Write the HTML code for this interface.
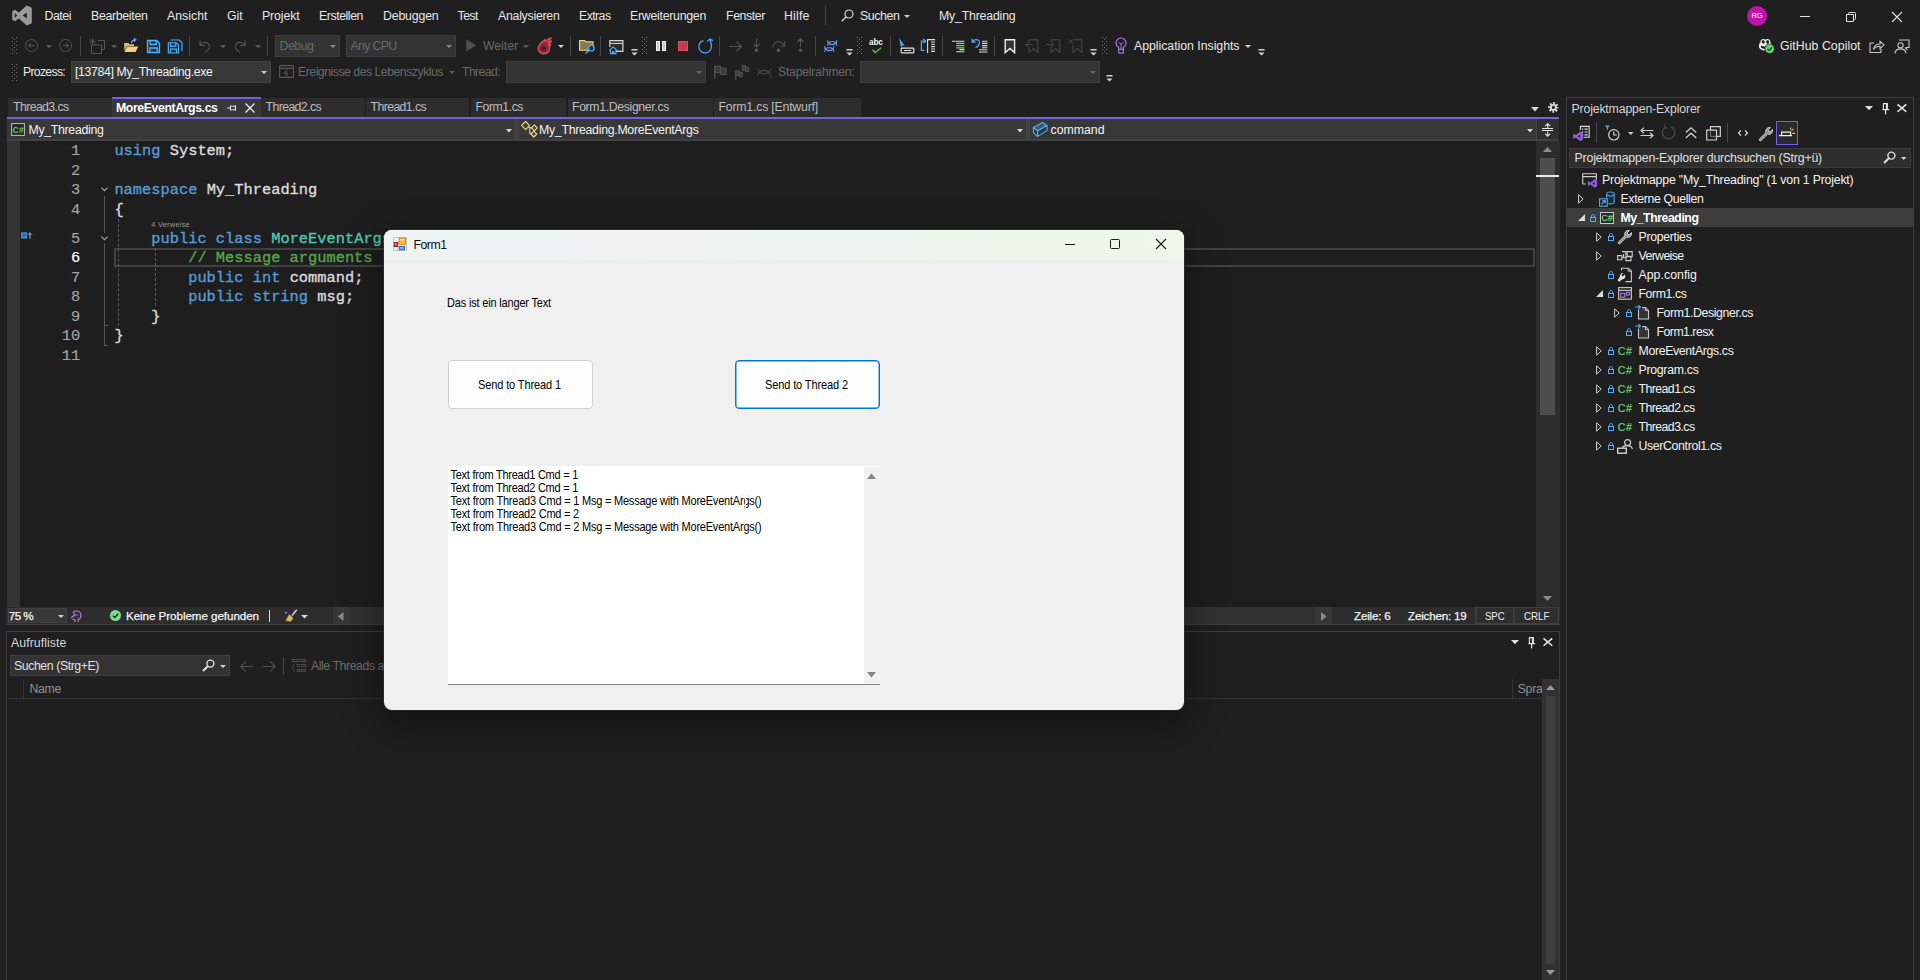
<!DOCTYPE html>
<html lang="de">
<head>
<meta charset="utf-8">
<title>My_Threading - Microsoft Visual Studio</title>
<style>
*{box-sizing:border-box;margin:0;padding:0}
html,body{width:1920px;height:980px;overflow:hidden;background:#1f1f1f}
body{font-family:"Liberation Sans",sans-serif;font-size:12px;color:#e6e6e6;position:relative}
.abs{position:absolute}
.t{position:absolute;white-space:pre}
svg{position:absolute;overflow:visible}

</style>
</head>
<body>

<!-- ===== top ===== -->
<div id="top">
<svg style="left:12px;top:5px;" width="20" height="21" viewBox="0 0 20 21"><path d="M14.8 0.5L19.8 2.8V18.2L14.8 20.5L6.8 13.4L3 16.2L0.2 14.8V6.2L3 4.8L6.8 7.6Z M14.8 7.4L10.8 10.5L14.8 13.6Z M2.8 8.3V12.7L5.3 10.5Z" fill="#9a9a9a" fill-rule="evenodd"/></svg>
<span class="t" style="left:44.5px;top:7.74px;font-size:12.3px;color:#e8e8e8;line-height:16px;height:16px;letter-spacing:-0.444px;">Datei</span>
<span class="t" style="left:91px;top:7.74px;font-size:12.3px;color:#e8e8e8;line-height:16px;height:16px;letter-spacing:-0.298px;">Bearbeiten</span>
<span class="t" style="left:167px;top:7.74px;font-size:12.3px;color:#e8e8e8;line-height:16px;height:16px;letter-spacing:0.025px;">Ansicht</span>
<span class="t" style="left:227px;top:7.74px;font-size:12.3px;color:#e8e8e8;line-height:16px;height:16px;letter-spacing:-0.073px;">Git</span>
<span class="t" style="left:262px;top:7.74px;font-size:12.3px;color:#e8e8e8;line-height:16px;height:16px;letter-spacing:-0.112px;">Projekt</span>
<span class="t" style="left:319px;top:7.74px;font-size:12.3px;color:#e8e8e8;line-height:16px;height:16px;letter-spacing:-0.427px;">Erstellen</span>
<span class="t" style="left:383px;top:7.74px;font-size:12.3px;color:#e8e8e8;line-height:16px;height:16px;letter-spacing:-0.158px;">Debuggen</span>
<span class="t" style="left:457.5px;top:7.74px;font-size:12.3px;color:#e8e8e8;line-height:16px;height:16px;letter-spacing:-0.516px;">Test</span>
<span class="t" style="left:498px;top:7.74px;font-size:12.3px;color:#e8e8e8;line-height:16px;height:16px;letter-spacing:-0.251px;">Analysieren</span>
<span class="t" style="left:579px;top:7.74px;font-size:12.3px;color:#e8e8e8;line-height:16px;height:16px;letter-spacing:-0.560px;">Extras</span>
<span class="t" style="left:630px;top:7.74px;font-size:12.3px;color:#e8e8e8;line-height:16px;height:16px;letter-spacing:-0.254px;">Erweiterungen</span>
<span class="t" style="left:726px;top:7.74px;font-size:12.3px;color:#e8e8e8;line-height:16px;height:16px;letter-spacing:-0.386px;">Fenster</span>
<span class="t" style="left:784px;top:7.74px;font-size:12.3px;color:#e8e8e8;line-height:16px;height:16px;letter-spacing:0.178px;">Hilfe</span>
<div class="abs" style="left:825px;top:5px;width:1px;height:20px;background:#464646;"></div>
<svg style="left:841px;top:9px;" width="13" height="13" viewBox="0 0 13 13"><circle cx="8" cy="5" r="4" fill="none" stroke="#d8d8d8" stroke-width="1.2"/><path d="M5.2 7.8L0.8 12.2" stroke="#d8d8d8" stroke-width="1.4"/></svg>
<span class="t" style="left:860px;top:7.74px;font-size:12.3px;color:#e8e8e8;line-height:16px;height:16px;letter-spacing:-0.370px;">Suchen</span>
<svg style="left:904px;top:15px;" width="6" height="3" viewBox="0 0 6 3"><path d="M0 0h6L3.0 3z" fill="#d0d0d0"/></svg>
<span class="t" style="left:939px;top:7.74px;font-size:12.3px;color:#e8e8e8;line-height:16px;height:16px;letter-spacing:-0.176px;">My_Threading</span>
<div class="abs" style="left:1747px;top:6px;width:20px;height:20px;background:#c212a9;border-radius:10px;"></div>
<span class="t" style="left:1751.5px;top:8.40px;font-size:7.5px;color:#ffffff;line-height:16px;height:16px;letter-spacing:-0.125px;">RG</span>
<div class="abs" style="left:1800px;top:16px;width:10px;height:1px;background:#e0e0e0;"></div>
<svg style="left:1846px;top:12px;" width="10" height="10" viewBox="0 0 10 10"><path d="M0.5 2.5h7v7h-7z M2.5 2.5v-1.2q0-0.8 0.8-0.8h5.4q0.8 0 0.8 0.8v5.4q0 0.8-0.8 0.8h-1.2" fill="none" stroke="#e0e0e0" stroke-width="1"/></svg>
<svg style="left:1892px;top:12px;" width="10" height="10" viewBox="0 0 10 10"><path d="M0 0L10 10M10 0L0 10" stroke="#e0e0e0" stroke-width="1.1"/></svg>
<svg style="left:12px;top:37px;" width="5" height="17" viewBox="0 0 5 17"><g fill="#707070" shape-rendering="crispEdges"><rect x="0" y="0" width="1" height="1"/><rect x="4" y="0" width="1" height="1"/><rect x="2" y="2" width="1" height="1"/><rect x="0" y="4" width="1" height="1"/><rect x="4" y="4" width="1" height="1"/><rect x="2" y="6" width="1" height="1"/><rect x="0" y="8" width="1" height="1"/><rect x="4" y="8" width="1" height="1"/><rect x="2" y="10" width="1" height="1"/><rect x="0" y="12" width="1" height="1"/><rect x="4" y="12" width="1" height="1"/><rect x="2" y="14" width="1" height="1"/><rect x="0" y="16" width="1" height="1"/><rect x="4" y="16" width="1" height="1"/></g></svg>
<svg style="left:25px;top:39px;" width="13" height="13" viewBox="0 0 13 13"><circle cx="6.5" cy="6.5" r="6" fill="none" stroke="#555555"/><path d="M9.5 6.5h-6M6 4L3.5 6.5L6 9" fill="none" stroke="#555555"/></svg>
<svg style="left:46px;top:44.5px;" width="6" height="3" viewBox="0 0 6 3"><path d="M0 0h6L3.0 3z" fill="#5e5e5e"/></svg>
<svg style="left:59px;top:39px;" width="13" height="13" viewBox="0 0 13 13"><circle cx="6.5" cy="6.5" r="6" fill="none" stroke="#555555"/><path d="M3.5 6.5h6M7 4L9.5 6.5L7 9" fill="none" stroke="#555555"/></svg>
<div class="abs" style="left:80px;top:36px;width:1px;height:20px;background:#464646;"></div>
<svg style="left:89px;top:38px;" width="17" height="16" viewBox="0 0 17 16"><g fill="none" stroke="#555555"><path d="M8.5 2.5h7v9h-3"/><path d="M2.5 7h10v8.5h-10z"/><path d="M3.5 0.2v7M0 3.7h7M1 1.2l5 5M6 1.2L1 6.2" stroke-width="0.8"/></g></svg>
<svg style="left:111px;top:44.5px;" width="6" height="3" viewBox="0 0 6 3"><path d="M0 0h6L3.0 3z" fill="#5e5e5e"/></svg>
<svg style="left:123px;top:38px;" width="16" height="15" viewBox="0 0 16 15"><path d="M1 5h4.5l1 1.2H11V8H4L1.5 13.5Z" fill="#d6b56c"/><path d="M4.3 8.6H15.3L12.6 14H1.6Z" fill="#f0d28a"/><path d="M8.5 5.2c0-2.4 1.6-3.4 4-3.4M10.8 0.2L12.8 1.8L10.8 3.6" fill="none" stroke="#55aaff" stroke-width="1.2"/></svg>
<svg style="left:146px;top:39px;" width="15" height="15" viewBox="0 0 15 15"><path d="M1.5 1.5h9.3L13.5 4.2V13.5H1.5Z" fill="#23313f" stroke="#4db2ff" stroke-width="1.3"/><path d="M4.2 1.5v4h6v-4M3.8 13.5v-4.5h7.4v4.5" fill="none" stroke="#4db2ff" stroke-width="1.3"/></svg>
<svg style="left:167px;top:39px;" width="16" height="15" viewBox="0 0 16 15"><path d="M3.5 1H12L15 3.6V12" fill="none" stroke="#4db2ff" stroke-width="1.2"/><g transform="translate(0,2.4) scale(0.86)"><path d="M1.5 1.5h9.3L13.5 4.2V13.5H1.5Z" fill="#23313f" stroke="#4db2ff" stroke-width="1.3"/><path d="M4.2 1.5v4h6v-4M3.8 13.5v-4.5h7.4v4.5" fill="none" stroke="#4db2ff" stroke-width="1.3"/></g></svg>
<div class="abs" style="left:189px;top:36px;width:1px;height:20px;background:#464646;"></div>
<svg style="left:198px;top:39px;" width="14" height="14" viewBox="0 0 14 14"><path d="M2 1.5v5h5M2.2 6.2C4 3 8 2.6 10.3 4.6c2.6 2.3 1.4 6-3.3 8.6" fill="none" stroke="#555555" stroke-width="1.1"/></svg>
<svg style="left:220px;top:44.5px;" width="6" height="3" viewBox="0 0 6 3"><path d="M0 0h6L3.0 3z" fill="#5e5e5e"/></svg>
<svg style="left:233px;top:39px;" width="14" height="14" viewBox="0 0 14 14"><path d="M12 1.5v5h-5M11.8 6.2C10 3 6 2.6 3.7 4.6c-2.6 2.3-1.4 6 3.3 8.6" fill="none" stroke="#555555" stroke-width="1.1"/></svg>
<svg style="left:255px;top:44.5px;" width="6" height="3" viewBox="0 0 6 3"><path d="M0 0h6L3.0 3z" fill="#5e5e5e"/></svg>
<div class="abs" style="left:267px;top:36px;width:1px;height:20px;background:#464646;"></div>
<div class="abs" style="left:275px;top:35px;width:65px;height:21.6px;background:#333333;border:1px solid #3e3e3e;"></div>
<span class="t" style="left:279.5px;top:37.74px;font-size:12.3px;color:#686868;line-height:16px;height:16px;letter-spacing:-0.450px;">Debug</span>
<svg style="left:330px;top:44.5px;" width="6" height="3" viewBox="0 0 6 3"><path d="M0 0h6L3.0 3z" fill="#8a8a8a"/></svg>
<div class="abs" style="left:346px;top:35px;width:110px;height:21.6px;background:#333333;border:1px solid #3e3e3e;"></div>
<span class="t" style="left:350.5px;top:37.74px;font-size:12.3px;color:#686868;line-height:16px;height:16px;letter-spacing:-0.654px;">Any CPU</span>
<svg style="left:446px;top:44.5px;" width="6" height="3" viewBox="0 0 6 3"><path d="M0 0h6L3.0 3z" fill="#8a8a8a"/></svg>
<svg style="left:465.6px;top:39.2px;" width="10.4" height="12.8" viewBox="0 0 10.4 12.8"><path d="M0.2 0.2L10.2 6.4L0.2 12.6Z" fill="#4e4e4e"/></svg>
<span class="t" style="left:483px;top:37.74px;font-size:12.3px;color:#686868;line-height:16px;height:16px;letter-spacing:-0.052px;">Weiter</span>
<svg style="left:523px;top:44.5px;" width="6" height="3" viewBox="0 0 6 3"><path d="M0 0h6L3.0 3z" fill="#5e5e5e"/></svg>
<svg style="left:537px;top:37px;" width="16" height="18" viewBox="0 0 16 18"><path d="M14.6 0.8C12.6 1.2 9.6 2.6 8 4.6C8.3 3.6 8.2 3 8 2.4C6.4 4.4 1.2 7 1.2 11.4C1.2 14.6 3.8 16.8 6.8 16.8C10.4 16.8 12.8 14 12.6 10.8C12.5 9.4 13 8.2 14 7.2C12.8 7.3 12 7.8 11.4 8.4C11.6 6.6 12.6 5.4 14.6 4.2C13.2 4.2 12 4.6 11 5.4C11.6 3.6 12.8 2 14.6 0.8Z" fill="#8c2c38" stroke="#ee4c5e" stroke-width="1.2" stroke-linejoin="round"/><circle cx="6.6" cy="11.6" r="2.5" fill="#5a1a24"/></svg>
<svg style="left:558px;top:44.5px;" width="6" height="3" viewBox="0 0 6 3"><path d="M0 0h6L3.0 3z" fill="#d0d0d0"/></svg>
<div class="abs" style="left:570px;top:36px;width:1px;height:20px;background:#464646;"></div>
<svg style="left:579px;top:39px;" width="16" height="16" viewBox="0 0 16 16"><path d="M0.6 1.5h5l1.4 1.4h7v8.4H0.6z" fill="#8a7a52" stroke="#f0d384" stroke-width="1.1"/><circle cx="12.4" cy="9.2" r="2.8" fill="#1f2a36" stroke="#4db2ff" stroke-width="1.2"/><path d="M10.4 11.2L6.4 14.6" stroke="#4db2ff" stroke-width="1.3"/></svg>
<div class="abs" style="left:600px;top:36px;width:1px;height:20px;background:#464646;"></div>
<svg style="left:609px;top:39px;" width="16" height="16" viewBox="0 0 16 16"><path d="M5.6 12.4h8.3V1.6H0.8V8" fill="#2c2c2c" stroke="#d6d6d6" stroke-width="1.2"/><path d="M0.8 4.4h13" stroke="#d6d6d6" stroke-width="1.1"/><path d="M0.2 11.6L4.2 8L8.2 11.6M1.4 10.8v3.8h5.6v-3.8M3.6 14.6v-2h1.2v2" fill="#1f1f1f" stroke="#4db2ff" stroke-width="1.1"/></svg>
<svg style="left:631px;top:49px;" width="7" height="6.4" viewBox="0 0 7 6.4"><path d="M0.4 0h6.2v1.4H0.4z M0.4 3.4h6.2L3.5 6.4z" fill="#d0d0d0"/></svg>
<svg style="left:642px;top:37px;" width="5" height="17" viewBox="0 0 5 17"><g fill="#707070" shape-rendering="crispEdges"><rect x="0" y="0" width="1" height="1"/><rect x="4" y="0" width="1" height="1"/><rect x="2" y="2" width="1" height="1"/><rect x="0" y="4" width="1" height="1"/><rect x="4" y="4" width="1" height="1"/><rect x="2" y="6" width="1" height="1"/><rect x="0" y="8" width="1" height="1"/><rect x="4" y="8" width="1" height="1"/><rect x="2" y="10" width="1" height="1"/><rect x="0" y="12" width="1" height="1"/><rect x="4" y="12" width="1" height="1"/><rect x="2" y="14" width="1" height="1"/><rect x="0" y="16" width="1" height="1"/><rect x="4" y="16" width="1" height="1"/></g></svg>
<div class="abs" style="left:656px;top:40.5px;width:4.2px;height:10.6px;background:#c4c4c4;border:1px solid #f2f2f2;"></div>
<div class="abs" style="left:662.2px;top:40.5px;width:4.2px;height:10.6px;background:#c4c4c4;border:1px solid #f2f2f2;"></div>
<div class="abs" style="left:677.8px;top:41px;width:10.2px;height:10px;background:#c43e4e;border:1px solid #e8485c;"></div>
<svg style="left:698px;top:38px;" width="16" height="16" viewBox="0 0 16 16"><path d="M5.4 2.6A6.3 6.3 0 1 0 13.4 8.6C13.4 6 12.8 3.6 12 1.4" fill="none" stroke="#4aa8ff" stroke-width="1.3"/><path d="M9.4 3.2L11.9 1L14.8 2.6" fill="none" stroke="#4aa8ff" stroke-width="1.3"/></svg>
<div class="abs" style="left:719px;top:36px;width:1px;height:20px;background:#464646;"></div>
<svg style="left:729px;top:41px;" width="13" height="11" viewBox="0 0 13 11"><path d="M0 5.5h12.4M7.4 0.6l5 4.9l-5 4.9" fill="none" stroke="#555555" stroke-width="1.1"/></svg>
<svg style="left:752px;top:38px;" width="9" height="15" viewBox="0 0 9 15"><path d="M4.5 0.5v8.5M1.4 5.8l3.1 3.2l3.1-3.2" fill="none" stroke="#555555" stroke-width="1.1"/><circle cx="4.5" cy="12.3" r="1.8" fill="#555555"/></svg>
<svg style="left:772px;top:40px;" width="14" height="13" viewBox="0 0 14 13"><path d="M0.6 7C1.6 3.6 4 1.8 6.6 1.8c2.4 0 4.4 1.4 5.8 4.2M12.6 1.6v4.6H8.2" fill="none" stroke="#555555" stroke-width="1.1"/><circle cx="6.5" cy="10.3" r="1.8" fill="#555555"/></svg>
<svg style="left:796px;top:38px;" width="9" height="15" viewBox="0 0 9 15"><path d="M4.5 9.2V0.8M1.4 4l3.1-3.2l3.1 3.2" fill="none" stroke="#555555" stroke-width="1.1"/><circle cx="4.5" cy="12.3" r="1.8" fill="#555555"/></svg>
<div class="abs" style="left:815px;top:36px;width:1px;height:20px;background:#464646;"></div>
<svg style="left:827px;top:40px;" width="11" height="7" viewBox="0 0 11 7"><path d="M0.4 5.8C1 2.6 3 1.6 5.2 1.6S9.4 2.6 10 5.8" fill="none" stroke="#a06ad6" stroke-width="1.2"/><path d="M0.4 0.4C1 3.6 3 4.6 5.2 4.6S9.4 3.6 10 0.4" fill="none" stroke="#3fb0f5" stroke-width="1.2"/></svg>
<svg style="left:824px;top:46px;" width="11" height="7" viewBox="0 0 11 7"><path d="M0.4 5.8C1 2.6 3 1.6 5.2 1.6S9.4 2.6 10 5.8" fill="none" stroke="#a06ad6" stroke-width="1.2"/><path d="M0.4 0.4C1 3.6 3 4.6 5.2 4.6S9.4 3.6 10 0.4" fill="none" stroke="#3fb0f5" stroke-width="1.2"/></svg>
<svg style="left:845.5px;top:49px;" width="7" height="6.4" viewBox="0 0 7 6.4"><path d="M0.4 0h6.2v1.4H0.4z M0.4 3.4h6.2L3.5 6.4z" fill="#d0d0d0"/></svg>
<svg style="left:857px;top:37px;" width="5" height="17" viewBox="0 0 5 17"><g fill="#707070" shape-rendering="crispEdges"><rect x="0" y="0" width="1" height="1"/><rect x="4" y="0" width="1" height="1"/><rect x="2" y="2" width="1" height="1"/><rect x="0" y="4" width="1" height="1"/><rect x="4" y="4" width="1" height="1"/><rect x="2" y="6" width="1" height="1"/><rect x="0" y="8" width="1" height="1"/><rect x="4" y="8" width="1" height="1"/><rect x="2" y="10" width="1" height="1"/><rect x="0" y="12" width="1" height="1"/><rect x="4" y="12" width="1" height="1"/><rect x="2" y="14" width="1" height="1"/><rect x="0" y="16" width="1" height="1"/><rect x="4" y="16" width="1" height="1"/></g></svg>
<span class="t" style="left:869px;top:38.26px;font-size:8.2px;color:#f4f4f4;line-height:10px;height:10px;font-weight:bold;letter-spacing:-0.136px;">abc</span>
<svg style="left:872px;top:47px;" width="10" height="6.5" viewBox="0 0 10 6.5"><path d="M0.5 2.6L3.3 5.6L9.2 0.6" fill="none" stroke="#5ecf6e" stroke-width="1.2"/></svg>
<div class="abs" style="left:890px;top:36px;width:1px;height:20px;background:#464646;"></div>
<svg style="left:898px;top:38px;" width="17" height="16" viewBox="0 0 17 16"><path d="M1 0.2L6.8 7.6L4.2 7.4L3 9.8Z" fill="#4aa8ff"/><path d="M4.4 9.2v1.4" stroke="#4aa8ff" stroke-width="1.2"/><rect x="3.2" y="10.2" width="12.6" height="4.6" rx="0.8" fill="none" stroke="#e4e4e4" stroke-width="1.2"/><path d="M6 12.5h7.2" stroke="#e4e4e4" stroke-width="1"/></svg>
<svg style="left:920px;top:38px;" width="16" height="16" viewBox="0 0 16 16"><path d="M4.6 3.2H1.4V12.4H4.6" fill="none" stroke="#4aa8ff" stroke-width="1.3"/><path d="M3.4 1L5.8 3.2L3.4 5.2" fill="none" stroke="#4aa8ff" stroke-width="1.2"/><path d="M7.6 1v14M7.6 1.6H15M11 4h4M11 6.2h4M11 8.6h4M11 11h4M11 13.4h4" fill="none" stroke="#e0e0e0" stroke-width="1.1"/></svg>
<div class="abs" style="left:942px;top:36px;width:1px;height:20px;background:#464646;"></div>
<svg style="left:951px;top:40px;" width="14" height="13" viewBox="0 0 14 13"><path d="M1 1.2h3M4.4 1.2H13.4M8.4 9.6h5M5.2 11.8h8.2" stroke="#dcdcdc" stroke-width="1.1"/><path d="M5.2 3.4h8.2M5.2 5.6h8.2M5.2 7.8h8.2" stroke="#6edb6e" stroke-width="1.2"/></svg>
<svg style="left:971px;top:38px;" width="17" height="16" viewBox="0 0 17 16"><path d="M11 3.2h5.4M11 5.4h5.4M11 7.6h5.4M11 9.8h5.4M8 11.8h8.4M8 14h8.4" stroke="#dcdcdc" stroke-width="1.1"/><path d="M1.2 0.8v3.4h3.4M1.4 4C3 1.6 6 0.8 7.8 2.6C9.6 4.6 8.4 7.6 4.6 9.8" fill="none" stroke="#4aa8ff" stroke-width="1.3"/></svg>
<div class="abs" style="left:994px;top:36px;width:1px;height:20px;background:#464646;"></div>
<svg style="left:1004px;top:39px;" width="12" height="15" viewBox="0 0 12 15"><path d="M1.2 0.8h9.4v12.8L5.9 9.4L1.2 13.6Z" fill="#333333" stroke="#ececec" stroke-width="1.4"/></svg>
<svg style="left:1025px;top:39px;" width="14" height="15" viewBox="0 0 14 15"><path d="M4.2 3.4V0.8h8.6v12.8L8.5 9.6L4.2 13.6V7.6" fill="none" stroke="#474747" stroke-width="1.1"/><path d="M7.6 5.5H0.8M3 3.2L0.6 5.5L3 7.8" fill="none" stroke="#474747" stroke-width="1"/></svg>
<svg style="left:1046px;top:39px;" width="15" height="15" viewBox="0 0 15 15"><path d="M5.2 3.4V0.8h8.6v12.8L9.5 9.6L5.2 13.6V7.6" fill="none" stroke="#474747" stroke-width="1.1"/><path d="M0.2 5.5H7.6M5.4 3.2L7.8 5.5L5.4 7.8" fill="none" stroke="#474747" stroke-width="1"/></svg>
<svg style="left:1068px;top:39px;" width="15" height="15" viewBox="0 0 15 15"><path d="M6 0.8h7.8v12.8L9.5 9.6L5.2 13.6V6" fill="none" stroke="#474747" stroke-width="1.1"/><path d="M0.6 0.4L5 4.6M5 0.4L0.6 4.6" fill="none" stroke="#474747" stroke-width="1"/></svg>
<svg style="left:1090px;top:49px;" width="7" height="6.4" viewBox="0 0 7 6.4"><path d="M0.4 0h6.2v1.4H0.4z M0.4 3.4h6.2L3.5 6.4z" fill="#d0d0d0"/></svg>
<svg style="left:1102px;top:37px;" width="5" height="17" viewBox="0 0 5 17"><g fill="#707070" shape-rendering="crispEdges"><rect x="0" y="0" width="1" height="1"/><rect x="4" y="0" width="1" height="1"/><rect x="2" y="2" width="1" height="1"/><rect x="0" y="4" width="1" height="1"/><rect x="4" y="4" width="1" height="1"/><rect x="2" y="6" width="1" height="1"/><rect x="0" y="8" width="1" height="1"/><rect x="4" y="8" width="1" height="1"/><rect x="2" y="10" width="1" height="1"/><rect x="0" y="12" width="1" height="1"/><rect x="4" y="12" width="1" height="1"/><rect x="2" y="14" width="1" height="1"/><rect x="0" y="16" width="1" height="1"/><rect x="4" y="16" width="1" height="1"/></g></svg>
<svg style="left:1115px;top:38px;" width="12" height="17" viewBox="0 0 12 17"><path d="M3.6 11.2V9.4A5 5 0 1 1 8.4 9.4V11.2" fill="none" stroke="#a474dc" stroke-width="1.2"/><rect x="3.6" y="11.4" width="4.8" height="3.6" fill="none" stroke="#a474dc" stroke-width="1.2"/><path d="M6 11V5.6M3.8 4.2L6 6.4L8.2 4.2" fill="none" stroke="#a474dc" stroke-width="1"/></svg>
<span class="t" style="left:1134px;top:37.74px;font-size:12.3px;color:#e8e8e8;line-height:16px;height:16px;letter-spacing:-0.023px;">Application Insights</span>
<svg style="left:1245px;top:44.5px;" width="6" height="3" viewBox="0 0 6 3"><path d="M0 0h6L3.0 3z" fill="#d0d0d0"/></svg>
<svg style="left:1257.5px;top:49px;" width="7" height="6.4" viewBox="0 0 7 6.4"><path d="M0.4 0h6.2v1.4H0.4z M0.4 3.4h6.2L3.5 6.4z" fill="#d0d0d0"/></svg>
<svg style="left:1758px;top:38px;" width="17" height="17" viewBox="0 0 17 17"><path d="M1 7.4C1 5.8 1.6 5 2.4 4.4C2.2 2.4 3.4 1 5.4 1C6.4 1 7 1.4 7.4 2C7.8 1.4 8.4 1 9.4 1C11.4 1 12.6 2.4 12.4 4.4C13.2 5 13.8 5.8 13.8 7.4V9.4C12.8 11.4 10.2 12.6 7.4 12.6S2 11.4 1 9.4Z" fill="#ededed"/><path d="M3.8 3.2C3.8 2.6 4.4 2.2 5.2 2.2S6.6 2.6 6.6 3.4V4.6C6.6 5.4 6 5.8 5.2 5.8S3.8 5.4 3.8 4.6ZM8.2 3.4C8.2 2.6 8.8 2.2 9.6 2.2S11 2.6 11 3.2V4.6C11 5.4 10.4 5.8 9.6 5.8S8.2 5.4 8.2 4.6Z" fill="#1f1f1f"/><path d="M3 7.6C4.4 8.4 5.8 8.6 7.4 8.6S10.4 8.4 11.8 7.6V9.4C10.6 10.4 9.2 10.8 7.4 10.8S4.2 10.4 3 9.4Z" fill="#1f1f1f"/><circle cx="11.7" cy="10.8" r="5.2" fill="#1f1f1f"/><circle cx="11.7" cy="10.8" r="4.5" fill="#5fd068"/><path d="M9.5 10.9l1.6 1.6l2.9-3.1" fill="none" stroke="#14331a" stroke-width="1.2"/></svg>
<span class="t" style="left:1780px;top:37.74px;font-size:12.3px;color:#e8e8e8;line-height:16px;height:16px;letter-spacing:0.038px;">GitHub Copilot</span>
<svg style="left:1869px;top:39px;" width="16" height="14" viewBox="0 0 16 14"><path d="M5 4H1v9.5h11V10" fill="none" stroke="#c8c8c8" stroke-width="1.1"/><path d="M4.5 10.5C5 7 7.5 5 11 5V2.2L15 6l-4 3.8V7.2C8.5 7.2 6 8 4.5 10.5Z" fill="none" stroke="#c8c8c8" stroke-width="1.1"/></svg>
<svg style="left:1894px;top:39px;" width="16" height="15" viewBox="0 0 16 15"><path d="M5 1h10v7.5h-3" fill="none" stroke="#c8c8c8" stroke-width="1.1"/><circle cx="6.5" cy="6.3" r="2.6" fill="none" stroke="#c8c8c8" stroke-width="1.1"/><path d="M1 14.5c0.3-3 2.4-4.6 5.5-4.6s5.2 1.6 5.5 4.6M11 8.5L13.5 11" fill="none" stroke="#c8c8c8" stroke-width="1.1"/></svg>
<svg style="left:12px;top:64px;" width="5" height="17" viewBox="0 0 5 17"><g fill="#707070" shape-rendering="crispEdges"><rect x="0" y="0" width="1" height="1"/><rect x="4" y="0" width="1" height="1"/><rect x="2" y="2" width="1" height="1"/><rect x="0" y="4" width="1" height="1"/><rect x="4" y="4" width="1" height="1"/><rect x="2" y="6" width="1" height="1"/><rect x="0" y="8" width="1" height="1"/><rect x="4" y="8" width="1" height="1"/><rect x="2" y="10" width="1" height="1"/><rect x="0" y="12" width="1" height="1"/><rect x="4" y="12" width="1" height="1"/><rect x="2" y="14" width="1" height="1"/><rect x="0" y="16" width="1" height="1"/><rect x="4" y="16" width="1" height="1"/></g></svg>
<span class="t" style="left:23px;top:63.74px;font-size:12.3px;color:#e8e8e8;line-height:16px;height:16px;letter-spacing:-0.730px;">Prozess:</span>
<div class="abs" style="left:71px;top:61px;width:200px;height:21.5px;background:#383838;border:1px solid #424242;"></div>
<span class="t" style="left:75px;top:63.74px;font-size:12.3px;color:#f0f0f0;line-height:16px;height:16px;letter-spacing:-0.367px;">[13784] My_Threading.exe</span>
<svg style="left:261px;top:70.5px;" width="6" height="3" viewBox="0 0 6 3"><path d="M0 0h6L3.0 3z" fill="#d0d0d0"/></svg>
<svg style="left:279px;top:65px;" width="15" height="13" viewBox="0 0 15 13"><path d="M0.6 0.6h13.8v11.8H0.6zM0.6 3.4h13.8" fill="none" stroke="#555555" stroke-width="1.1"/><path d="M8.5 4.5L5.5 8.2h3L6.6 11.5" fill="none" stroke="#555555" stroke-width="1.1"/></svg>
<span class="t" style="left:298px;top:63.74px;font-size:12.3px;color:#686868;line-height:16px;height:16px;letter-spacing:-0.503px;">Ereignisse des Lebenszyklus</span>
<svg style="left:449px;top:70.5px;" width="6" height="3" viewBox="0 0 6 3"><path d="M0 0h6L3.0 3z" fill="#5e5e5e"/></svg>
<span class="t" style="left:462px;top:63.74px;font-size:12.3px;color:#686868;line-height:16px;height:16px;letter-spacing:-0.627px;">Thread:</span>
<div class="abs" style="left:506px;top:61px;width:199.8px;height:21.5px;background:#333333;border:1px solid #3c3c3c;"></div>
<svg style="left:696px;top:70.5px;" width="6" height="3" viewBox="0 0 6 3"><path d="M0 0h6L3.0 3z" fill="#6a6a6a"/></svg>
<svg style="left:714px;top:65px;" width="13" height="14" viewBox="0 0 13 14"><path d="M0.8 0.5v13" stroke="#555555" stroke-width="1.2"/><path d="M1 1.2h5.6v6.4H1ZM6.6 3h5.6v6.4H6.6Z" fill="#3a3a3a" stroke="#555555" stroke-width="1"/></svg>
<svg style="left:735px;top:65px;" width="15" height="15" viewBox="0 0 15 15"><path d="M0.8 5.8v9" stroke="#555555" stroke-width="1.2"/><g fill="#3a3a3a" stroke="#555555" stroke-width="1"><path d="M1 5.8h3.4v4.6H1ZM4.4 7.4h3v4.4h-3ZM7.4 0.6h3.2v4.6H7.4ZM10.6 2.2h3.2v4.4h-3.2Z"/></g></svg>
<svg style="left:757px;top:66px;" width="15" height="12" viewBox="0 0 15 12"><path d="M0.5 9.6C3 2.6 11 2.6 14 9.6M0.5 2.6C3 9.6 11 9.6 14 2.6M14 9.4v2.2" fill="none" stroke="#474747" stroke-width="1.1"/></svg>
<span class="t" style="left:778px;top:63.74px;font-size:12.3px;color:#686868;line-height:16px;height:16px;letter-spacing:-0.268px;">Stapelrahmen:</span>
<div class="abs" style="left:860px;top:61px;width:240px;height:21.5px;background:#333333;border:1px solid #3c3c3c;"></div>
<svg style="left:1089.5px;top:70.5px;" width="6" height="3" viewBox="0 0 6 3"><path d="M0 0h6L3.0 3z" fill="#6a6a6a"/></svg>
<svg style="left:1106px;top:75px;" width="7" height="6.4" viewBox="0 0 7 6.4"><path d="M0.4 0h6.2v1.4H0.4z M0.4 3.4h6.2L3.5 6.4z" fill="#d0d0d0"/></svg>
</div>

<!-- ===== tabs ===== -->
<div id="tabs">
<div class="abs" style="left:8px;top:98px;width:103.5px;height:19px;background:#2d2d2d;"></div>
<span class="t" style="left:13px;top:98.74px;font-size:12.3px;color:#bdbdbd;line-height:16px;height:16px;letter-spacing:-0.602px;">Thread3.cs</span>
<div class="abs" style="left:261px;top:98px;width:103.5px;height:19px;background:#2d2d2d;"></div>
<span class="t" style="left:265.5px;top:98.74px;font-size:12.3px;color:#bdbdbd;line-height:16px;height:16px;letter-spacing:-0.602px;">Thread2.cs</span>
<div class="abs" style="left:366px;top:98px;width:103px;height:19px;background:#2d2d2d;"></div>
<span class="t" style="left:370.5px;top:98.74px;font-size:12.3px;color:#bdbdbd;line-height:16px;height:16px;letter-spacing:-0.602px;">Thread1.cs</span>
<div class="abs" style="left:470.5px;top:98px;width:95.5px;height:19px;background:#2d2d2d;"></div>
<span class="t" style="left:475.5px;top:98.74px;font-size:12.3px;color:#bdbdbd;line-height:16px;height:16px;letter-spacing:-0.469px;">Form1.cs</span>
<div class="abs" style="left:567.5px;top:98px;width:145.0px;height:19px;background:#2d2d2d;"></div>
<span class="t" style="left:572px;top:98.74px;font-size:12.3px;color:#bdbdbd;line-height:16px;height:16px;letter-spacing:-0.365px;">Form1.Designer.cs</span>
<div class="abs" style="left:714px;top:98px;width:146.5px;height:19px;background:#2d2d2d;"></div>
<span class="t" style="left:718.5px;top:98.74px;font-size:12.3px;color:#bdbdbd;line-height:16px;height:16px;letter-spacing:-0.205px;">Form1.cs [Entwurf]</span>
<div class="abs" style="left:112px;top:97px;width:148.5px;height:20px;background:#383838;"></div>
<div class="abs" style="left:112px;top:97px;width:148.5px;height:2px;background:#7160e8;"></div>
<span class="t" style="left:116px;top:99.74px;font-size:12.3px;color:#ffffff;line-height:16px;height:16px;font-weight:bold;letter-spacing:-0.405px;">MoreEventArgs.cs</span>
<svg style="left:227px;top:104px;" width="9" height="8" viewBox="0 0 9 8"><path d="M0 4h3M3.5 1.5v5M3.5 2.2h4.8v3.6H3.5M8.5 1.2v5.6" fill="none" stroke="#e0e0e0" stroke-width="1"/></svg>
<svg style="left:245px;top:103px;" width="10" height="10" viewBox="0 0 10 10"><path d="M0.5 0.5l9 9M9.5 0.5l-9 9" stroke="#f0f0f0" stroke-width="1.3"/></svg>
<div class="abs" style="left:7px;top:117px;width:1552px;height:2px;background:#7160e8;"></div>
<svg style="left:1531px;top:106.7px;" width="8" height="4.5" viewBox="0 0 8 4.5"><path d="M0 0h8L4.0 4.5z" fill="#dcdcdc"/></svg>
<svg style="left:1547.5px;top:101.7px;" width="11" height="11" viewBox="0 0 11 11"><circle cx="5.4" cy="5.4" r="4.1" fill="none" stroke="#dcdcdc" stroke-width="2.4" stroke-dasharray="1.7 1.52" stroke-dashoffset="0.85"/><circle cx="5.4" cy="5.4" r="2.5" fill="none" stroke="#dcdcdc" stroke-width="1.9"/></svg>
<div class="abs" style="left:7px;top:119px;width:1552px;height:22px;background:#414141;"></div>
<div class="abs" style="left:7px;top:119px;width:507px;height:20.3px;background:#383838;"></div>
<div class="abs" style="left:518.7px;top:119px;width:507px;height:20.3px;background:#383838;"></div>
<div class="abs" style="left:1030px;top:119px;width:506px;height:20.3px;background:#383838;"></div>
<div class="abs" style="left:1537px;top:119px;width:22px;height:20.3px;background:#2e2e2e;"></div>
<svg style="left:11px;top:123px;" width="14" height="13" viewBox="0 0 14 13"><rect x="0.6" y="0.6" width="12.8" height="11.8" fill="#262626" stroke="#bdbdbd" stroke-width="1"/></svg>
<span class="t" style="left:12.4px;top:124.82px;font-size:8.6px;color:#5fcf6b;line-height:10px;height:10px;font-weight:bold;letter-spacing:0.300px;">C#</span>
<span class="t" style="left:28.5px;top:121.74px;font-size:12.3px;color:#f2f2f2;line-height:16px;height:16px;letter-spacing:-0.301px;">My_Threading</span>
<svg style="left:506px;top:128.7px;" width="6" height="3.6" viewBox="0 0 6 3.6"><path d="M0 0h6L3.0 3.6z" fill="#d8d8d8"/></svg>
<svg style="left:521px;top:121px;" width="17" height="17" viewBox="0 0 17 17"><g fill="#4a4230" stroke="#f0d68c" stroke-width="1.1" stroke-linejoin="round"><path d="M7.4 6.2L10.6 6.8M8.8 6.6V12.4L10.4 13" fill="none"/><path d="M0.5 4.4L4.6 0.5L8.6 4.6L4.6 8.6Z"/><path d="M10.4 6.8L13.4 4L16.2 6.8L13.4 9.8Z"/><path d="M10 13L12.8 10.2L15.8 13L12.8 16Z"/></g></svg>
<span class="t" style="left:539px;top:121.74px;font-size:12.3px;color:#f2f2f2;line-height:16px;height:16px;letter-spacing:-0.279px;">My_Threading.MoreEventArgs</span>
<svg style="left:1017px;top:128.7px;" width="6" height="3.6" viewBox="0 0 6 3.6"><path d="M0 0h6L3.0 3.6z" fill="#d8d8d8"/></svg>
<svg style="left:1033px;top:122px;" width="15" height="15" viewBox="0 0 15 15"><g stroke="#4fb0f8" stroke-width="1.1" stroke-linejoin="round"><path d="M0.4 5.4L9.5 0.5L14 3.4L4.6 9Z" fill="#43566a"/><path d="M0.4 5.4V10.6L4.6 14.4V9Z" fill="#2c3640"/><path d="M4.6 14.4L14 8.6V3.4L4.6 9Z" fill="#2c3640"/></g></svg>
<span class="t" style="left:1050.5px;top:121.74px;font-size:12.3px;color:#f2f2f2;line-height:16px;height:16px;letter-spacing:0.000px;">command</span>
<svg style="left:1526.5px;top:128.7px;" width="6" height="3.6" viewBox="0 0 6 3.6"><path d="M0 0h6L3.0 3.6z" fill="#d8d8d8"/></svg>
<svg style="left:1542px;top:122.6px;" width="12" height="14" viewBox="0 0 12 14"><path d="M0 5.9h11.4M0 7.9h11.4" stroke="#e4e4e4" stroke-width="1" shape-rendering="crispEdges"/><path d="M5.7 5.4V1M3.2 3.2L5.7 0.6L8.2 3.2M5.7 8.4V12.8M3.2 10.6L5.7 13.2L8.2 10.6" fill="none" stroke="#e4e4e4" stroke-width="1.1"/></svg>
</div>

<!-- ===== editor ===== -->
<div id="editor">
<div class="abs" style="left:7px;top:141px;width:1529px;height:466px;background:#1e1e1e;"></div>
<div class="abs" style="left:7px;top:141px;width:13px;height:466px;background:#333333;"></div>
<div class="abs" style="left:114px;top:248px;width:1421px;height:19px;border:2px solid #414141;"></div>
<div class="abs" style="left:104px;top:196px;width:1px;height:149px;background:#555555;"></div>
<div class="abs" style="left:104px;top:344.5px;width:4px;height:1px;background:#555555;"></div>
<div class="abs" style="left:104px;top:325px;width:4px;height:1px;background:#555555;"></div>
<div class="abs" style="left:118px;top:219px;width:0;height:107px;border-left:1px dashed #5a5a5a"></div>
<div class="abs" style="left:155px;top:248px;width:0;height:58px;border-left:1px dashed #5a5a5a"></div>
<div class="abs" style="left:100px;top:184.2px;width:9px;height:10px;background:#1e1e1e;"></div>
<svg style="left:101px;top:187.0px;" width="7" height="5" viewBox="0 0 7 5"><path d="M0.4 0.6L3.5 3.7L6.6 0.6" fill="none" stroke="#a8a8a8" stroke-width="1.1"/></svg>
<div class="abs" style="left:100px;top:232.8px;width:9px;height:10px;background:#1e1e1e;"></div>
<svg style="left:101px;top:235.60000000000002px;" width="7" height="5" viewBox="0 0 7 5"><path d="M0.4 0.6L3.5 3.7L6.6 0.6" fill="none" stroke="#a8a8a8" stroke-width="1.1"/></svg>
<span class="t" style="left:70.97500000000001px;top:141.20px;font-size:15.375px;color:#a4a4a4;line-height:20px;height:20px;font-family:'Liberation Mono',monospace;-webkit-text-stroke:0.15px #a4a4a4;">1</span>
<span class="t" style="left:70.97500000000001px;top:160.70px;font-size:15.375px;color:#a4a4a4;line-height:20px;height:20px;font-family:'Liberation Mono',monospace;-webkit-text-stroke:0.15px #a4a4a4;">2</span>
<span class="t" style="left:70.97500000000001px;top:180.20px;font-size:15.375px;color:#a4a4a4;line-height:20px;height:20px;font-family:'Liberation Mono',monospace;-webkit-text-stroke:0.15px #a4a4a4;">3</span>
<span class="t" style="left:70.97500000000001px;top:199.70px;font-size:15.375px;color:#a4a4a4;line-height:20px;height:20px;font-family:'Liberation Mono',monospace;-webkit-text-stroke:0.15px #a4a4a4;">4</span>
<span class="t" style="left:70.97500000000001px;top:228.80px;font-size:15.375px;color:#a4a4a4;line-height:20px;height:20px;font-family:'Liberation Mono',monospace;-webkit-text-stroke:0.15px #a4a4a4;">5</span>
<span class="t" style="left:70.97500000000001px;top:248.30px;font-size:15.375px;color:#ffffff;line-height:20px;height:20px;font-family:'Liberation Mono',monospace;-webkit-text-stroke:0.15px #ffffff;">6</span>
<span class="t" style="left:70.97500000000001px;top:267.80px;font-size:15.375px;color:#a4a4a4;line-height:20px;height:20px;font-family:'Liberation Mono',monospace;-webkit-text-stroke:0.15px #a4a4a4;">7</span>
<span class="t" style="left:70.97500000000001px;top:287.30px;font-size:15.375px;color:#a4a4a4;line-height:20px;height:20px;font-family:'Liberation Mono',monospace;-webkit-text-stroke:0.15px #a4a4a4;">8</span>
<span class="t" style="left:70.97500000000001px;top:306.80px;font-size:15.375px;color:#a4a4a4;line-height:20px;height:20px;font-family:'Liberation Mono',monospace;-webkit-text-stroke:0.15px #a4a4a4;">9</span>
<span class="t" style="left:61.75px;top:326.20px;font-size:15.375px;color:#a4a4a4;line-height:20px;height:20px;font-family:'Liberation Mono',monospace;-webkit-text-stroke:0.15px #a4a4a4;">10</span>
<span class="t" style="left:61.75px;top:345.70px;font-size:15.375px;color:#a4a4a4;line-height:20px;height:20px;font-family:'Liberation Mono',monospace;-webkit-text-stroke:0.15px #a4a4a4;">11</span>
<span class="t" style="left:114.4px;top:141.20px;font-size:15.375px;color:#569cd6;line-height:20px;height:20px;font-family:'Liberation Mono',monospace;-webkit-text-stroke:0.35px #569cd6;">using</span>
<span class="t" style="left:160.525px;top:141.20px;font-size:15.375px;color:#dcdcdc;line-height:20px;height:20px;font-family:'Liberation Mono',monospace;-webkit-text-stroke:0.35px #dcdcdc;"> System;</span>
<span class="t" style="left:114.4px;top:180.20px;font-size:15.375px;color:#569cd6;line-height:20px;height:20px;font-family:'Liberation Mono',monospace;-webkit-text-stroke:0.35px #569cd6;">namespace</span>
<span class="t" style="left:197.425px;top:180.20px;font-size:15.375px;color:#dcdcdc;line-height:20px;height:20px;font-family:'Liberation Mono',monospace;-webkit-text-stroke:0.35px #dcdcdc;"> My_Threading</span>
<span class="t" style="left:114.4px;top:199.70px;font-size:15.375px;color:#dcdcdc;line-height:20px;height:20px;font-family:'Liberation Mono',monospace;-webkit-text-stroke:0.35px #dcdcdc;">{</span>
<span class="t" style="left:151.3px;top:228.80px;font-size:15.375px;color:#569cd6;line-height:20px;height:20px;font-family:'Liberation Mono',monospace;-webkit-text-stroke:0.35px #569cd6;">public class</span>
<span class="t" style="left:262.0px;top:228.80px;font-size:15.375px;color:#4ec9b0;line-height:20px;height:20px;font-family:'Liberation Mono',monospace;-webkit-text-stroke:0.35px #4ec9b0;"> MoreEventArgs</span>
<span class="t" style="left:188.2px;top:248.30px;font-size:15.375px;color:#57a64a;line-height:20px;height:20px;font-family:'Liberation Mono',monospace;-webkit-text-stroke:0.35px #57a64a;">// Message arguments - commands</span>
<span class="t" style="left:188.2px;top:267.80px;font-size:15.375px;color:#569cd6;line-height:20px;height:20px;font-family:'Liberation Mono',monospace;-webkit-text-stroke:0.35px #569cd6;">public int</span>
<span class="t" style="left:280.45px;top:267.80px;font-size:15.375px;color:#dcdcdc;line-height:20px;height:20px;font-family:'Liberation Mono',monospace;-webkit-text-stroke:0.35px #dcdcdc;"> command;</span>
<span class="t" style="left:188.2px;top:287.30px;font-size:15.375px;color:#569cd6;line-height:20px;height:20px;font-family:'Liberation Mono',monospace;-webkit-text-stroke:0.35px #569cd6;">public string</span>
<span class="t" style="left:308.125px;top:287.30px;font-size:15.375px;color:#dcdcdc;line-height:20px;height:20px;font-family:'Liberation Mono',monospace;-webkit-text-stroke:0.35px #dcdcdc;"> msg;</span>
<span class="t" style="left:151.3px;top:306.80px;font-size:15.375px;color:#dcdcdc;line-height:20px;height:20px;font-family:'Liberation Mono',monospace;-webkit-text-stroke:0.35px #dcdcdc;">}</span>
<span class="t" style="left:114.4px;top:326.20px;font-size:15.375px;color:#dcdcdc;line-height:20px;height:20px;font-family:'Liberation Mono',monospace;-webkit-text-stroke:0.35px #dcdcdc;">}</span>
<span class="t" style="left:151.3px;top:219.74px;font-size:7.4px;color:#9a9a9a;line-height:10px;height:10px;letter-spacing:0.254px;">4 Verweise</span>
<svg style="left:21px;top:232px;" width="12" height="7" viewBox="0 0 12 7"><rect x="0" y="0.3" width="6.2" height="6.2" fill="#3f8ed8"/><rect x="1.6" y="1.9" width="3" height="3" fill="#2a5f96"/><path d="M9 6.8V1M7.2 2.6L9 0.8L10.8 2.6" fill="none" stroke="#b8b8b8" stroke-width="1"/></svg>
<div class="abs" style="left:1536px;top:141px;width:23.5px;height:466px;background:#2d2d2d;"></div>
<svg style="left:1543px;top:147px;" width="9" height="5" viewBox="0 0 9 5"><path d="M0 5L4.5 0L9 5Z" fill="#8c8c8c"/></svg>
<svg style="left:1543px;top:596px;" width="9" height="5" viewBox="0 0 9 5"><path d="M0 0L4.5 5L9 0Z" fill="#8c8c8c"/></svg>
<div class="abs" style="left:1540px;top:158px;width:15px;height:257px;background:#4d4d4d;"></div>
<div class="abs" style="left:1536px;top:175px;width:23px;height:2px;background:#e8e8e8;"></div>
<div class="abs" style="left:6px;top:607px;width:1553.5px;height:18px;background:#2d2d2d;"></div>
<div class="abs" style="left:6px;top:624px;width:1553.5px;height:1px;background:#3d3d3d;"></div>
<div class="abs" style="left:7.5px;top:607.6px;width:59.2px;height:15.6px;background:#383838;border:1px solid #404040;"></div>
<span class="t" style="left:8.8px;top:607.98px;font-size:11.6px;color:#f4f4f4;line-height:16px;height:16px;letter-spacing:-0.559px;-webkit-text-stroke:0.25px #f4f4f4;">75 %</span>
<svg style="left:58px;top:614.5px;" width="6" height="3" viewBox="0 0 6 3"><path d="M0 0h6L3.0 3z" fill="#d0d0d0"/></svg>
<svg style="left:70px;top:610px;" width="12" height="13" viewBox="0 0 12 13"><path d="M5 12V10.2C3.4 9.6 2.6 8.6 2.6 8.6M8.2 12V9.6C10 8.8 11 7.2 11 5.4C11 2.8 9 0.8 6.4 0.8C4.6 0.8 3.2 1.8 2.6 3" fill="none" stroke="#9d72d4" stroke-width="1.3"/><path d="M0.6 7.6L3.2 5.2A2 2 0 0 1 5.6 2.8L4.4 4L5.4 5L6.6 3.8A2 2 0 0 1 4.2 6.2L1.6 8.6Z" fill="#9d72d4"/><path d="M7 4.2c0.6 0.4 1 1 1 1.8M7.6 7.4v1" stroke="#9d72d4" stroke-width="0.9" fill="none"/></svg>
<svg style="left:110px;top:610.3px;" width="11" height="11" viewBox="0 0 11 11"><circle cx="5.5" cy="5.5" r="5.5" fill="#7ddc88"/><path d="M2.8 5.6l1.9 1.9l3.6-3.8" fill="none" stroke="#1f1f1f" stroke-width="1.3"/></svg>
<span class="t" style="left:126px;top:607.98px;font-size:11.6px;color:#f4f4f4;line-height:16px;height:16px;letter-spacing:-0.047px;-webkit-text-stroke:0.25px #f4f4f4;">Keine Probleme gefunden</span>
<div class="abs" style="left:269px;top:609.5px;width:1.3px;height:12.5px;background:#e0e0e0;"></div>
<svg style="left:283.5px;top:609px;" width="14" height="13" viewBox="0 0 14 13"><path d="M12.8 0.8L8 6.5" stroke="#d8d8d8" stroke-width="1.4"/><path d="M5.2 5.6l4 3.4l-2.4 3.4l-5-0.8Z" fill="#d9b96a" stroke="#b8924a" stroke-width="0.6"/><path d="M2 2l0.5 1.2l1.2 0.5l-1.2 0.5l-0.5 1.2l-0.5-1.2l-1.2-0.5l1.2-0.5Z" fill="#58a6ff"/></svg>
<svg style="left:301px;top:614.5px;" width="7" height="3.5" viewBox="0 0 7 3.5"><path d="M0 0h7L3.5 3.5z" fill="#d8d8d8"/></svg>
<div class="abs" style="left:332.5px;top:607px;width:999px;height:17px;background:#313131;"></div>
<div class="abs" style="left:332.5px;top:607px;width:16.5px;height:17px;background:#373737;"></div>
<div class="abs" style="left:1315px;top:607px;width:16.5px;height:17px;background:#373737;"></div>
<svg style="left:337.5px;top:611.5px;" width="5.5" height="9" viewBox="0 0 5.5 9"><path d="M5.5 0L0 4.5L5.5 9Z" fill="#8a8a8a"/></svg>
<svg style="left:1321px;top:611.5px;" width="5.5" height="9" viewBox="0 0 5.5 9"><path d="M0 0L5.5 4.5L0 9Z" fill="#8a8a8a"/></svg>
<span class="t" style="left:1354px;top:607.98px;font-size:11.6px;color:#f4f4f4;line-height:16px;height:16px;letter-spacing:-0.191px;-webkit-text-stroke:0.25px #f4f4f4;">Zeile: 6</span>
<span class="t" style="left:1408px;top:607.98px;font-size:11.6px;color:#f4f4f4;line-height:16px;height:16px;letter-spacing:-0.190px;-webkit-text-stroke:0.25px #f4f4f4;">Zeichen: 19</span>
<div class="abs" style="left:1475.3px;top:607px;width:84.2px;height:18px;background:#3f3f3f;"></div>
<div class="abs" style="left:1476.5px;top:608px;width:36.3px;height:15px;background:#2e2e2e;"></div>
<span class="t" style="left:1485px;top:607.98px;font-size:11.6px;color:#f0f0f0;line-height:16px;height:16px;transform:scale(0.8178,1);transform-origin:0 12.02px;">SPC</span>
<div class="abs" style="left:1515px;top:608px;width:43px;height:15px;background:#2e2e2e;"></div>
<span class="t" style="left:1524px;top:607.98px;font-size:11.6px;color:#f0f0f0;line-height:16px;height:16px;transform:scale(0.8421,1);transform-origin:0 12.02px;">CRLF</span>
</div>

<!-- ===== callstack ===== -->
<div id="callstack">
<div class="abs" style="left:6px;top:631px;width:1553.5px;height:349px;background:#1f1f1f;border:1px solid #3d3d3d;border-bottom:none;"></div>
<span class="t" style="left:11px;top:634.74px;font-size:12.3px;color:#d4d4d4;line-height:16px;height:16px;letter-spacing:0.074px;">Aufrufliste</span>
<svg style="left:1511px;top:640px;" width="8" height="4.2" viewBox="0 0 8 4.2"><path d="M0 0h8L4.0 4.2z" fill="#e0e0e0"/></svg>
<svg style="left:1527.4px;top:636.9px;" width="9" height="12" viewBox="0 0 9 12"><path d="M1.4 6.6h6.8" stroke="#e6e6e6" stroke-width="1.2"/><path d="M2.4 6V0.6h3.4" fill="none" stroke="#e6e6e6" stroke-width="1.1"/><path d="M5.9 0V6.4" stroke="#e6e6e6" stroke-width="2"/><path d="M4.6 7v4.4" stroke="#e6e6e6" stroke-width="1.2"/></svg>
<svg style="left:1543.4px;top:638px;" width="9.8" height="8.2" viewBox="0 0 9.8 8.2"><path d="M0.5 0.4L9.3 7.8M9.3 0.4L0.5 7.8" stroke="#ececec" stroke-width="1.5"/></svg>
<div class="abs" style="left:9.5px;top:655px;width:220.5px;height:21px;background:#333333;border:1px solid #3f3f3f;"></div>
<span class="t" style="left:14px;top:657.74px;font-size:12.3px;color:#e0e0e0;line-height:16px;height:16px;letter-spacing:-0.417px;">Suchen (Strg+E)</span>
<svg style="left:202px;top:659px;" width="13" height="13" viewBox="0 0 13 13"><circle cx="8.4" cy="4.6" r="3.5" fill="none" stroke="#e0e0e0" stroke-width="1.4"/><path d="M5.8 7.2L1 12" stroke="#e0e0e0" stroke-width="2"/></svg>
<svg style="left:220px;top:664.5px;" width="6" height="3" viewBox="0 0 6 3"><path d="M0 0h6L3.0 3z" fill="#d0d0d0"/></svg>
<svg style="left:240px;top:661px;" width="13" height="11" viewBox="0 0 13 11"><path d="M13 5.5H0.8M6 0.4L0.8 5.5L6 10.6" fill="none" stroke="#4d4d4d" stroke-width="1.1"/></svg>
<svg style="left:263px;top:661px;" width="13" height="11" viewBox="0 0 13 11"><path d="M0 5.5H12.2M7 0.4L12.2 5.5L7 10.6" fill="none" stroke="#4d4d4d" stroke-width="1.1"/></svg>
<div class="abs" style="left:283px;top:657px;width:1px;height:18px;background:#464646;"></div>
<svg style="left:292px;top:659px;" width="14" height="13" viewBox="0 0 14 13"><g fill="none" stroke="#4f4f4f" stroke-width="1"><rect x="0.5" y="0.5" width="6.6" height="2"/><rect x="9.2" y="0.5" width="4.2" height="2"/><rect x="5.2" y="5.5" width="2.4" height="2"/><rect x="9.2" y="5.5" width="4.2" height="2"/><rect x="5.2" y="10.4" width="2.4" height="2"/><rect x="9.2" y="10.4" width="4.2" height="2"/><path d="M2.6 4.6C0.4 6 0.4 11 2.6 12.6"/></g></svg>
<span class="t" style="left:311px;top:657.74px;font-size:12.3px;color:#6d6d6d;line-height:16px;height:16px;letter-spacing:-0.434px;">Alle Threads a</span>
<div class="abs" style="left:23px;top:679px;width:1px;height:19px;background:#333333;"></div>
<span class="t" style="left:29.5px;top:680.74px;font-size:12.3px;color:#8e8e8e;line-height:16px;height:16px;letter-spacing:-0.328px;">Name</span>
<div class="abs" style="left:1512px;top:679px;width:1px;height:19px;background:#333333;"></div>
<span class="t" style="left:1517.7px;top:680.74px;font-size:12.3px;color:#8e8e8e;line-height:16px;height:16px;letter-spacing:-0.3px;">Sprac</span>
<div class="abs" style="left:8px;top:698px;width:1534px;height:1px;background:#333333;"></div>
<div class="abs" style="left:1542px;top:679px;width:17px;height:301px;background:#323232;"></div>
<svg style="left:1546px;top:685px;" width="9" height="5" viewBox="0 0 9 5"><path d="M0 5L4.5 0L9 5Z" fill="#999"/></svg>
<svg style="left:1546px;top:970px;" width="9" height="5" viewBox="0 0 9 5"><path d="M0 0L4.5 5L9 0Z" fill="#999"/></svg>
<div class="abs" style="left:1546px;top:696px;width:9px;height:268px;background:#3e3e3e;"></div>
</div>

<!-- ===== solexp ===== -->
<div id="solexp">
<div class="abs" style="left:1566px;top:97px;width:348px;height:883px;background:#1f1f1f;border:1px solid #3d3d3d;border-bottom:none;"></div>
<span class="t" style="left:1571.5px;top:101.24px;font-size:12.3px;color:#d4d4d4;line-height:16px;height:16px;letter-spacing:-0.164px;">Projektmappen-Explorer</span>
<svg style="left:1865px;top:105.8px;" width="8" height="4.2" viewBox="0 0 8 4.2"><path d="M0 0h8L4.0 4.2z" fill="#e0e0e0"/></svg>
<svg style="left:1881px;top:102.7px;" width="9" height="12" viewBox="0 0 9 12"><path d="M1.4 6.6h6.8" stroke="#e6e6e6" stroke-width="1.2"/><path d="M2.4 6V0.6h3.4" fill="none" stroke="#e6e6e6" stroke-width="1.1"/><path d="M5.9 0V6.4" stroke="#e6e6e6" stroke-width="2"/><path d="M4.6 7v4.4" stroke="#e6e6e6" stroke-width="1.2"/></svg>
<svg style="left:1897.2px;top:103.8px;" width="9.8" height="8.2" viewBox="0 0 9.8 8.2"><path d="M0.5 0.4L9.3 7.8M9.3 0.4L0.5 7.8" stroke="#ececec" stroke-width="1.5"/></svg>
<svg style="left:1573px;top:125px;" width="17" height="17" viewBox="0 0 17 17"><path d="M7.4 5V1.4h8.8v10.8H10.6" fill="#262626" stroke="#d8d8d8" stroke-width="1.1"/><path d="M9 4.2h1.2M9 7h1.2M9 9.8h1.2M11.6 4.2h3M11.6 7h3M11.6 9.8h3" stroke="#e0e0e0" stroke-width="1.2"/><path d="M7.2 6.6L9.8 7.8V14.8L7.2 16L2.8 12.4L1.2 13.8L0.2 13.2V9.4L1.2 8.8L2.8 10.2Z M7.2 9.4L4.8 11.3L7.2 13.2Z" fill="#9463e0" fill-rule="evenodd"/></svg>
<div class="abs" style="left:1596px;top:123px;width:1px;height:20px;background:#464646;"></div>
<svg style="left:1605px;top:125px;" width="15" height="16" viewBox="0 0 15 16"><path d="M0 0.4h4.8L3 2.8V5L1.8 4.2V2.8Z" fill="#55aaff"/><circle cx="8.8" cy="9.8" r="5.2" fill="none" stroke="#d0d0d0" stroke-width="1.2"/><path d="M8.8 6.6V10h3" fill="none" stroke="#d0d0d0" stroke-width="1.2"/></svg>
<svg style="left:1627.5px;top:131.5px;" width="5.5" height="3" viewBox="0 0 5.5 3"><path d="M0 0h5.5L2.75 3z" fill="#d0d0d0"/></svg>
<svg style="left:1640px;top:127px;" width="14" height="12" viewBox="0 0 14 12"><path d="M13.5 3.5H1M4 0.6L1 3.5L4 6.2M0.5 8.5H13M10 5.8L13 8.5L10 11.4" fill="none" stroke="#d0d0d0" stroke-width="1.2"/></svg>
<svg style="left:1661px;top:125px;" width="15" height="15" viewBox="0 0 15 15"><path d="M4 2.4A6.2 6.2 0 1 0 9.5 1.6" fill="none" stroke="#4a4a4a" stroke-width="1.2"/><path d="M3.8 -0.4V3H7" fill="none" stroke="#4a4a4a" stroke-width="1.2"/></svg>
<svg style="left:1685px;top:127px;" width="12" height="12" viewBox="0 0 12 12"><path d="M0.8 5.6L6 0.8L11.2 5.6M0.8 11L6 6.2L11.2 11" fill="none" stroke="#d0d0d0" stroke-width="1.3"/></svg>
<svg style="left:1706px;top:126px;" width="15" height="15" viewBox="0 0 15 15"><path d="M4.5 0.6h9.8v9.8H4.5Z" fill="none" stroke="#d0d0d0" stroke-width="1.2"/><path d="M0.7 4.2h9.8v9.8H0.7Z" fill="#1f1f1f" stroke="#d0d0d0" stroke-width="1.2"/><path d="M4.5 4.2V10.4H10.5" fill="none" stroke="#8a8a8a" stroke-width="0.9"/></svg>
<div class="abs" style="left:1727px;top:123px;width:1px;height:20px;background:#464646;"></div>
<svg style="left:1738px;top:130px;" width="10" height="6" viewBox="0 0 10 6"><path d="M3 0.4L0.6 3L3 5.6M7 0.4L9.4 3L7 5.6" fill="none" stroke="#e0e0e0" stroke-width="1.2"/></svg>
<svg style="left:1757.5px;top:125.5px;" width="16.0" height="16.0" viewBox="0 0 16 16"><path d="M14.4 3.6l-2.2 2.2l-1.7-0.3l-0.3-1.7L12.4 1.6A3.7 3.7 0 0 0 8 6.6L1.4 13.2a1.1 1.1 0 0 0 1.5 1.5L9.5 8.1A3.7 3.7 0 0 0 14.4 3.6Z" fill="#8c8c8c" stroke="#d8d8d8" stroke-width="1" stroke-linejoin="round"/></svg>
<div class="abs" style="left:1776px;top:121px;width:22px;height:24px;background:#2a2a2a;border:1px solid #7160e8;"></div>
<svg style="left:1779px;top:126px;" width="17" height="12" viewBox="0 0 17 12"><path d="M0 9.6h13M2.6 9.4V6.2h9v3.2" fill="none" stroke="#f0f0f0" stroke-width="1.2"/><path d="M12.6 4.6l1.6-1.8M13.4 7.4h2.6M11.6 3.4V1.6" stroke="#ecc85a" stroke-width="1.1"/></svg>
<div class="abs" style="left:1569px;top:147.5px;width:342px;height:20.5px;background:#2e2e2e;border:1px solid #3a3a3a;"></div>
<span class="t" style="left:1574.5px;top:149.74px;font-size:12.3px;color:#e0e0e0;line-height:16px;height:16px;letter-spacing:-0.165px;">Projektmappen-Explorer durchsuchen (Strg+ü)</span>
<svg style="left:1883px;top:151px;" width="13" height="13" viewBox="0 0 13 13"><circle cx="8.4" cy="4.6" r="3.5" fill="none" stroke="#e0e0e0" stroke-width="1.4"/><path d="M5.8 7.2L1 12" stroke="#e0e0e0" stroke-width="2"/></svg>
<svg style="left:1901px;top:156.5px;" width="5.5" height="3" viewBox="0 0 5.5 3"><path d="M0 0h5.5L2.75 3z" fill="#d0d0d0"/></svg>
<div class="abs" style="left:1567px;top:208px;width:346px;height:19px;background:#3d3d3d;"></div>
<svg style="left:1581.5px;top:172.5px;" width="16" height="15" viewBox="0 0 16 15"><path d="M0.7 11V0.8h13.6V7M0.7 3.6h13.6M0.7 11h3" fill="none" stroke="#d0d0d0" stroke-width="1.1"/><path d="M12.6 6.3L15 7.4V13.6L12.6 14.7L8.6 11.4L6.8 12.8L5.8 12.2V8.8L6.8 8.2L8.6 9.6Z M12.6 8.9L10.4 10.5L12.6 12.1Z" fill="#8e5ad8" fill-rule="evenodd"/></svg>
<span class="t" style="left:1602px;top:172.14px;font-size:12.3px;color:#f2f2f2;line-height:16px;height:16px;letter-spacing:-0.195px;">Projektmappe "My_Threading" (1 von 1 Projekt)</span>
<svg style="left:1578px;top:194.0px;" width="6" height="10" viewBox="0 0 6 10"><path d="M0.6 0.8L5.2 5L0.6 9.2Z" fill="none" stroke="#d0d0d0" stroke-width="1"/></svg>
<svg style="left:1599px;top:191.0px;" width="16" height="16" viewBox="0 0 16 16"><path d="M7.6 7V3C7.6 1.8 9.2 1 11.4 1s3.8 0.8 3.8 2V11c0 1.1-1.4 1.9-3.8 1.9H9.4" fill="#1c2c3a" stroke="#4a9edc" stroke-width="1.1"/><path d="M7.6 3C7.6 4.2 9.2 5 11.4 5s3.8-0.8 3.8-2" fill="none" stroke="#4a9edc" stroke-width="1.1"/><rect x="0.6" y="7.8" width="7.6" height="7.4" fill="#1f1f1f" stroke="#55aaff" stroke-width="1.1"/><path d="M2.6 13.2L6 9.8M3.4 9.6H6.2V12.4" fill="none" stroke="#55aaff" stroke-width="1.1"/></svg>
<span class="t" style="left:1620.5px;top:191.14px;font-size:12.3px;color:#f2f2f2;line-height:16px;height:16px;letter-spacing:-0.346px;">Externe Quellen</span>
<svg style="left:1577.5px;top:214.3px;" width="7" height="7" viewBox="0 0 7 7"><path d="M7 0V7H0Z" fill="#dcdcdc"/></svg>
<svg style="left:1590px;top:214px;" width="6" height="8" viewBox="0 0 6 8"><path d="M1.5 3.5V2C1.5 1 2.1 0.5 3 0.5S4.5 1 4.5 2V3.5" fill="none" stroke="#55aaff" stroke-width="1"/><rect x="0.5" y="3.5" width="5" height="4" fill="none" stroke="#55aaff" stroke-width="1"/></svg>
<svg style="left:1600px;top:211.8px;" width="14" height="12" viewBox="0 0 14 12"><rect x="0.5" y="0.5" width="13" height="11" fill="#2a2a2a" stroke="#c8c8c8" stroke-width="1"/></svg>
<span class="t" style="left:1601.6px;top:213.02px;font-size:8.6px;color:#72d47e;line-height:10px;height:10px;letter-spacing:0.100px;-webkit-text-stroke:0.25px #72d47e;">C#</span>
<span class="t" style="left:1620.5px;top:210.14px;font-size:12.3px;color:#ffffff;line-height:16px;height:16px;font-weight:bold;letter-spacing:-0.447px;">My_Threading</span>
<svg style="left:1596px;top:232.0px;" width="6" height="10" viewBox="0 0 6 10"><path d="M0.6 0.8L5.2 5L0.6 9.2Z" fill="none" stroke="#d0d0d0" stroke-width="1"/></svg>
<svg style="left:1608px;top:233px;" width="6" height="8" viewBox="0 0 6 8"><path d="M1.5 3.5V2C1.5 1 2.1 0.5 3 0.5S4.5 1 4.5 2V3.5" fill="none" stroke="#55aaff" stroke-width="1"/><rect x="0.5" y="3.5" width="5" height="4" fill="none" stroke="#55aaff" stroke-width="1"/></svg>
<svg style="left:1617px;top:228.5px;" width="16.0" height="16.0" viewBox="0 0 16 16"><path d="M14.4 3.6l-2.2 2.2l-1.7-0.3l-0.3-1.7L12.4 1.6A3.7 3.7 0 0 0 8 6.6L1.4 13.2a1.1 1.1 0 0 0 1.5 1.5L9.5 8.1A3.7 3.7 0 0 0 14.4 3.6Z" fill="#8c8c8c" stroke="#d8d8d8" stroke-width="1" stroke-linejoin="round"/></svg>
<span class="t" style="left:1638.5px;top:229.14px;font-size:12.3px;color:#f2f2f2;line-height:16px;height:16px;letter-spacing:-0.305px;">Properties</span>
<svg style="left:1596px;top:251.0px;" width="6" height="10" viewBox="0 0 6 10"><path d="M0.6 0.8L5.2 5L0.6 9.2Z" fill="none" stroke="#d0d0d0" stroke-width="1"/></svg>
<svg style="left:1617px;top:250.5px;" width="16" height="10" viewBox="0 0 16 10"><path d="M0.6 4.6h4.2v4.2H0.6ZM4.8 6.7H9M6.6 6.7V3M5 0.6h3.8v3.6M10.2 0.6h5v5h-5ZM9 5.2h5v4.4H9Z" fill="none" stroke="#d0d0d0" stroke-width="1.1"/></svg>
<span class="t" style="left:1638.5px;top:248.14px;font-size:12.3px;color:#f2f2f2;line-height:16px;height:16px;letter-spacing:-0.613px;">Verweise</span>
<svg style="left:1608px;top:271px;" width="6" height="8" viewBox="0 0 6 8"><path d="M1.5 3.5V2C1.5 1 2.1 0.5 3 0.5S4.5 1 4.5 2V3.5" fill="none" stroke="#55aaff" stroke-width="1"/><rect x="0.5" y="3.5" width="5" height="4" fill="none" stroke="#55aaff" stroke-width="1"/></svg>
<svg style="left:1616.5px;top:267.0px;" width="16" height="16" viewBox="0 0 16 16"><path d="M4.5 3.5V1.2h6.8L14.4 4V14.6H8.5" fill="none" stroke="#c8c8c8" stroke-width="1.1"/><path d="M11.2 1.4V4.2H14" fill="none" stroke="#c8c8c8" stroke-width="1"/><path d="M7.6 7.6L6 9.2L4.8 9L4.6 7.8L6.2 6.2A2.7 2.7 0 0 0 3 9.6L0.6 13.2L2 14.8L5.6 12.2A2.7 2.7 0 0 0 7.6 7.6Z" fill="#e0e0e0"/></svg>
<span class="t" style="left:1638.5px;top:267.14px;font-size:12.3px;color:#f2f2f2;line-height:16px;height:16px;letter-spacing:0.037px;">App.config</span>
<svg style="left:1595.5px;top:290.3px;" width="7" height="7" viewBox="0 0 7 7"><path d="M7 0V7H0Z" fill="#dcdcdc"/></svg>
<svg style="left:1608px;top:290px;" width="6" height="8" viewBox="0 0 6 8"><path d="M1.5 3.5V2C1.5 1 2.1 0.5 3 0.5S4.5 1 4.5 2V3.5" fill="none" stroke="#55aaff" stroke-width="1"/><rect x="0.5" y="3.5" width="5" height="4" fill="none" stroke="#55aaff" stroke-width="1"/></svg>
<svg style="left:1618px;top:287.2px;" width="14" height="13" viewBox="0 0 14 13"><rect x="0.6" y="0.6" width="12.8" height="11.6" fill="#2a2a2a" stroke="#c8c8c8" stroke-width="1.1"/><path d="M0.6 3.4h12.8" stroke="#c8c8c8" stroke-width="1.1"/><rect x="2.6" y="6.4" width="4.2" height="3.8" fill="none" stroke="#a178e8" stroke-width="1.1"/><rect x="8.4" y="5.4" width="3.2" height="2.6" fill="none" stroke="#a178e8" stroke-width="1.1"/></svg>
<span class="t" style="left:1638.5px;top:286.14px;font-size:12.3px;color:#f2f2f2;line-height:16px;height:16px;letter-spacing:-0.406px;">Form1.cs</span>
<svg style="left:1613.5px;top:308.0px;" width="6" height="10" viewBox="0 0 6 10"><path d="M0.6 0.8L5.2 5L0.6 9.2Z" fill="none" stroke="#d0d0d0" stroke-width="1"/></svg>
<svg style="left:1626px;top:309px;" width="6" height="8" viewBox="0 0 6 8"><path d="M1.5 3.5V2C1.5 1 2.1 0.5 3 0.5S4.5 1 4.5 2V3.5" fill="none" stroke="#55aaff" stroke-width="1"/><rect x="0.5" y="3.5" width="5" height="4" fill="none" stroke="#55aaff" stroke-width="1"/></svg>
<svg style="left:1635px;top:305.0px;" width="15" height="15" viewBox="0 0 15 15"><path d="M3.5 4.6V14h10V5.4L10.6 2.6H7.2" fill="#333333" stroke="#c8c8c8" stroke-width="1.1"/><path d="M10.4 2.8v2.8h2.8" fill="#4a4a4a" stroke="#c8c8c8" stroke-width="1"/><path d="M0 2h5.4M3.4 0.2L5.6 2L3.4 3.8" fill="none" stroke="#55aaff" stroke-width="1.1"/></svg>
<span class="t" style="left:1656.5px;top:305.14px;font-size:12.3px;color:#f2f2f2;line-height:16px;height:16px;letter-spacing:-0.394px;">Form1.Designer.cs</span>
<svg style="left:1626px;top:328px;" width="6" height="8" viewBox="0 0 6 8"><path d="M1.5 3.5V2C1.5 1 2.1 0.5 3 0.5S4.5 1 4.5 2V3.5" fill="none" stroke="#55aaff" stroke-width="1"/><rect x="0.5" y="3.5" width="5" height="4" fill="none" stroke="#55aaff" stroke-width="1"/></svg>
<svg style="left:1635px;top:324.0px;" width="15" height="15" viewBox="0 0 15 15"><path d="M3.5 4.6V14h10V5.4L10.6 2.6H7.2" fill="#333333" stroke="#c8c8c8" stroke-width="1.1"/><path d="M10.4 2.8v2.8h2.8" fill="#4a4a4a" stroke="#c8c8c8" stroke-width="1"/><path d="M0 2h5.4M3.4 0.2L5.6 2L3.4 3.8" fill="none" stroke="#55aaff" stroke-width="1.1"/></svg>
<span class="t" style="left:1656.5px;top:324.14px;font-size:12.3px;color:#f2f2f2;line-height:16px;height:16px;letter-spacing:-0.519px;">Form1.resx</span>
<svg style="left:1596px;top:346.0px;" width="6" height="10" viewBox="0 0 6 10"><path d="M0.6 0.8L5.2 5L0.6 9.2Z" fill="none" stroke="#d0d0d0" stroke-width="1"/></svg>
<svg style="left:1608px;top:347px;" width="6" height="8" viewBox="0 0 6 8"><path d="M1.5 3.5V2C1.5 1 2.1 0.5 3 0.5S4.5 1 4.5 2V3.5" fill="none" stroke="#55aaff" stroke-width="1"/><rect x="0.5" y="3.5" width="5" height="4" fill="none" stroke="#55aaff" stroke-width="1"/></svg>
<span class="t" style="left:1617.7px;top:345.13px;font-size:10.6px;color:#6ad178;line-height:12px;height:12px;letter-spacing:0.627px;-webkit-text-stroke:0.2px #6ad178;">C#</span>
<span class="t" style="left:1638.5px;top:343.14px;font-size:12.3px;color:#f2f2f2;line-height:16px;height:16px;letter-spacing:-0.342px;">MoreEventArgs.cs</span>
<svg style="left:1596px;top:365.0px;" width="6" height="10" viewBox="0 0 6 10"><path d="M0.6 0.8L5.2 5L0.6 9.2Z" fill="none" stroke="#d0d0d0" stroke-width="1"/></svg>
<svg style="left:1608px;top:366px;" width="6" height="8" viewBox="0 0 6 8"><path d="M1.5 3.5V2C1.5 1 2.1 0.5 3 0.5S4.5 1 4.5 2V3.5" fill="none" stroke="#55aaff" stroke-width="1"/><rect x="0.5" y="3.5" width="5" height="4" fill="none" stroke="#55aaff" stroke-width="1"/></svg>
<span class="t" style="left:1617.7px;top:364.13px;font-size:10.6px;color:#6ad178;line-height:12px;height:12px;letter-spacing:0.627px;-webkit-text-stroke:0.2px #6ad178;">C#</span>
<span class="t" style="left:1638.5px;top:362.14px;font-size:12.3px;color:#f2f2f2;line-height:16px;height:16px;letter-spacing:-0.287px;">Program.cs</span>
<svg style="left:1596px;top:384.0px;" width="6" height="10" viewBox="0 0 6 10"><path d="M0.6 0.8L5.2 5L0.6 9.2Z" fill="none" stroke="#d0d0d0" stroke-width="1"/></svg>
<svg style="left:1608px;top:385px;" width="6" height="8" viewBox="0 0 6 8"><path d="M1.5 3.5V2C1.5 1 2.1 0.5 3 0.5S4.5 1 4.5 2V3.5" fill="none" stroke="#55aaff" stroke-width="1"/><rect x="0.5" y="3.5" width="5" height="4" fill="none" stroke="#55aaff" stroke-width="1"/></svg>
<span class="t" style="left:1617.7px;top:383.13px;font-size:10.6px;color:#6ad178;line-height:12px;height:12px;letter-spacing:0.627px;-webkit-text-stroke:0.2px #6ad178;">C#</span>
<span class="t" style="left:1638.5px;top:381.14px;font-size:12.3px;color:#f2f2f2;line-height:16px;height:16px;letter-spacing:-0.552px;">Thread1.cs</span>
<svg style="left:1596px;top:403.0px;" width="6" height="10" viewBox="0 0 6 10"><path d="M0.6 0.8L5.2 5L0.6 9.2Z" fill="none" stroke="#d0d0d0" stroke-width="1"/></svg>
<svg style="left:1608px;top:404px;" width="6" height="8" viewBox="0 0 6 8"><path d="M1.5 3.5V2C1.5 1 2.1 0.5 3 0.5S4.5 1 4.5 2V3.5" fill="none" stroke="#55aaff" stroke-width="1"/><rect x="0.5" y="3.5" width="5" height="4" fill="none" stroke="#55aaff" stroke-width="1"/></svg>
<span class="t" style="left:1617.7px;top:402.13px;font-size:10.6px;color:#6ad178;line-height:12px;height:12px;letter-spacing:0.627px;-webkit-text-stroke:0.2px #6ad178;">C#</span>
<span class="t" style="left:1638.5px;top:400.14px;font-size:12.3px;color:#f2f2f2;line-height:16px;height:16px;letter-spacing:-0.552px;">Thread2.cs</span>
<svg style="left:1596px;top:422.0px;" width="6" height="10" viewBox="0 0 6 10"><path d="M0.6 0.8L5.2 5L0.6 9.2Z" fill="none" stroke="#d0d0d0" stroke-width="1"/></svg>
<svg style="left:1608px;top:423px;" width="6" height="8" viewBox="0 0 6 8"><path d="M1.5 3.5V2C1.5 1 2.1 0.5 3 0.5S4.5 1 4.5 2V3.5" fill="none" stroke="#55aaff" stroke-width="1"/><rect x="0.5" y="3.5" width="5" height="4" fill="none" stroke="#55aaff" stroke-width="1"/></svg>
<span class="t" style="left:1617.7px;top:421.13px;font-size:10.6px;color:#6ad178;line-height:12px;height:12px;letter-spacing:0.627px;-webkit-text-stroke:0.2px #6ad178;">C#</span>
<span class="t" style="left:1638.5px;top:419.14px;font-size:12.3px;color:#f2f2f2;line-height:16px;height:16px;letter-spacing:-0.552px;">Thread3.cs</span>
<svg style="left:1596px;top:441.0px;" width="6" height="10" viewBox="0 0 6 10"><path d="M0.6 0.8L5.2 5L0.6 9.2Z" fill="none" stroke="#d0d0d0" stroke-width="1"/></svg>
<svg style="left:1608px;top:442px;" width="6" height="8" viewBox="0 0 6 8"><path d="M1.5 3.5V2C1.5 1 2.1 0.5 3 0.5S4.5 1 4.5 2V3.5" fill="none" stroke="#55aaff" stroke-width="1"/><rect x="0.5" y="3.5" width="5" height="4" fill="none" stroke="#55aaff" stroke-width="1"/></svg>
<svg style="left:1616.5px;top:438.0px;" width="16" height="16" viewBox="0 0 16 16"><circle cx="10.6" cy="4.6" r="3" fill="none" stroke="#d0d0d0" stroke-width="1.2"/><path d="M5.4 9.6C6.2 8.2 8 7.6 10.6 7.6S14.8 8.6 15.4 11" fill="none" stroke="#d0d0d0" stroke-width="1.2"/><rect x="0.7" y="10.2" width="8.6" height="5" fill="#1f1f1f" stroke="#e0e0e0" stroke-width="1.3"/></svg>
<span class="t" style="left:1638.5px;top:438.14px;font-size:12.3px;color:#f2f2f2;line-height:16px;height:16px;letter-spacing:-0.344px;">UserControl1.cs</span>
</div>

<!-- ===== form ===== -->
<div id="form">
<div class="abs" style="left:384px;top:230px;width:800px;height:480px;border-radius:8px;background:#f0f0f0;box-shadow:0 0 0 1px rgba(60,60,60,0.5),0 12px 34px 6px rgba(0,0,0,0.38);overflow:hidden"><div style="position:absolute;left:0;top:0;width:800px;height:30px;background:linear-gradient(90deg,#eef3f4 0%,#eef4f2 45%,#eef6ea 85%,#eef7e9 100%)"></div></div>
<svg style="left:393px;top:237px;" width="14" height="14" viewBox="0 0 14 14"><rect x="0.5" y="0.5" width="13" height="13" fill="#f4f4f4" stroke="#c4c4c4" stroke-width="1"/><path d="M0.5 9.5h13M4.5 9.5v4" stroke="#d0d0d0" stroke-width="1"/><rect x="6" y="1" width="6.6" height="6.4" fill="#f5b82e" stroke="#d08a18" stroke-width="0.8"/><rect x="7" y="2" width="4.6" height="1.6" fill="#fde28a"/><rect x="1.2" y="5.4" width="3.6" height="4.2" fill="#d02a1a" stroke="#9a140c" stroke-width="0.8"/><rect x="2.2" y="6.4" width="1.4" height="1.8" fill="#ffc0b8"/><rect x="6.2" y="9.4" width="5.4" height="3.4" fill="#4a8ee8" stroke="#2a60b8" stroke-width="0.8"/><rect x="7.2" y="10.4" width="3.2" height="1" fill="#b8d8ff"/></svg>
<span class="t" style="left:413.5px;top:236.74px;font-size:12.3px;color:#101010;line-height:16px;height:16px;letter-spacing:-0.506px;">Form1</span>
<div class="abs" style="left:1065px;top:244px;width:10px;height:1px;background:#1a1a1a;"></div>
<div class="abs" style="left:1110px;top:239px;width:10px;height:10px;border:1px solid #1a1a1a;border-radius:1.5px;"></div>
<svg style="left:1156px;top:238.9px;" width="10" height="10" viewBox="0 0 10 10"><path d="M0 0L10 10M10 0L0 10" stroke="#1a1a1a" stroke-width="1.1"/></svg>
<span class="t" style="left:447px;top:295.19px;font-size:11px;color:#000000;line-height:16px;height:16px;transform:scaleY(1.1);transform-origin:0 11.81px;letter-spacing:-0.175px;">Das ist ein langer Text</span>
<div class="abs" style="left:448px;top:360px;width:145px;height:49px;background:#fdfdfd;border:1px solid #d0d0d0;border-radius:4px;"></div>
<span class="t" style="left:478px;top:377.09px;font-size:11px;color:#000000;line-height:16px;height:16px;transform:scaleY(1.1);transform-origin:0 11.81px;letter-spacing:-0.113px;">Send to Thread 1</span>
<div class="abs" style="left:735px;top:360px;width:145px;height:49px;background:#fdfdfd;border:1px solid #0078d4;border-radius:4px;box-shadow:inset 0 0 0 0.5px #0078d4;"></div>
<span class="t" style="left:765px;top:377.09px;font-size:11px;color:#000000;line-height:16px;height:16px;transform:scaleY(1.1);transform-origin:0 11.81px;letter-spacing:-0.113px;">Send to Thread 2</span>
<div class="abs" style="left:448px;top:466px;width:432px;height:219px;background:#ffffff;border-bottom:1px solid #868686;"></div>
<div class="abs" style="left:863.5px;top:466.5px;width:16px;height:217.5px;background:#f0f0f0;"></div>
<svg style="left:867px;top:472.5px;" width="9" height="6" viewBox="0 0 9 6"><path d="M0 6L4.5 0.5L9 6Z" fill="#848484"/></svg>
<svg style="left:867px;top:672px;" width="9" height="6" viewBox="0 0 9 6"><path d="M0 0L4.5 5.5L9 0Z" fill="#848484"/></svg>
<span class="t" style="left:450.5px;top:468.69px;font-size:11px;color:#000000;line-height:13px;height:13px;transform:scaleY(1.1);transform-origin:0 10.31px;letter-spacing:-0.260px;">Text from Thread1 Cmd = 1</span>
<span class="t" style="left:450.5px;top:481.69px;font-size:11px;color:#000000;line-height:13px;height:13px;transform:scaleY(1.1);transform-origin:0 10.31px;letter-spacing:-0.260px;">Text from Thread2 Cmd = 1</span>
<span class="t" style="left:450.5px;top:494.69px;font-size:11px;color:#000000;line-height:13px;height:13px;transform:scaleY(1.1);transform-origin:0 10.31px;letter-spacing:-0.214px;">Text from Thread3 Cmd = 1 Msg = Message with MoreEventArgs()</span>
<span class="t" style="left:450.5px;top:507.69px;font-size:11px;color:#000000;line-height:13px;height:13px;transform:scaleY(1.1);transform-origin:0 10.31px;letter-spacing:-0.220px;">Text from Thread2 Cmd = 2</span>
<span class="t" style="left:450.5px;top:520.69px;font-size:11px;color:#000000;line-height:13px;height:13px;transform:scaleY(1.1);transform-origin:0 10.31px;letter-spacing:-0.214px;">Text from Thread3 Cmd = 2 Msg = Message with MoreEventArgs()</span>
<div class="abs" style="left:745px;top:496px;width:1px;height:15px;background:#ffffff;"></div>
<svg style="left:742px;top:495px;" width="7" height="17" viewBox="0 0 7 17"><path d="M0 0.5h2.6M4.4 0.5h2.6M0 16h2.6M4.4 16h2.6" stroke="#e9eded" stroke-width="1"/><path d="M3.5 1v15" stroke="#f3f5f5" stroke-width="1"/></svg>
</div>
</body>
</html>
